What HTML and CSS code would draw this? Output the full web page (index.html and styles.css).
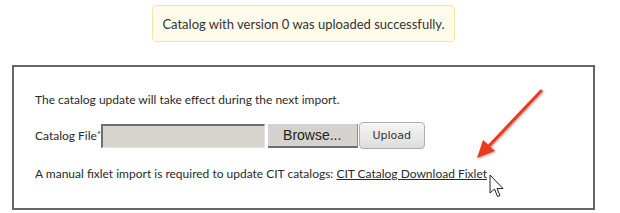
FILE: index.html
```html
<!DOCTYPE html>
<html lang="en">
<head>
    <meta charset="UTF-8">
    <title>Catalog upload</title>
    <link rel="stylesheet" href="styles.css">
</head>
<body>
    <div class="page">
        <div class="notice">Catalog with version 0 was uploaded successfully.</div>
        <div class="panel">
            <p class="intro">The catalog update will take effect during the next import.</p>
            <div class="file-row">
                <label class="file-label">Catalog File<span class="req">*</span></label>
                <span class="file-input"></span>
                <span class="browse">Browse...</span>
                <button class="upload">Upload</button>
            </div>
            <p class="manual">A manual fixlet import is required to update CIT catalogs: <a href="" class="link">CIT Catalog Download Fixlet</a></p>

            <!-- annotation overlay -->
            <svg class="arrow" width="80" height="80" viewBox="0 0 80 80">
                <defs>
                    <filter id="shadow" x="-20%" y="-20%" width="140%" height="140%">
                        <feDropShadow dx="1" dy="1" stdDeviation="1" flood-color="#000" flood-opacity="0.35"/>
                    </filter>
                </defs>
                <g filter="url(#shadow)">
                    <line x1="68" y1="7" x2="14" y2="64" stroke="#ec3a1e" stroke-width="3" stroke-linecap="round"/>
                    <polygon points="4,74 10,56 22,67" fill="#ec3a1e"/>
                </g>
            </svg>
            <svg class="cursor" width="16" height="26" viewBox="0 0 16 26">
                <path d="M1 1 L1 19 L5.5 15 L8.5 22.5 L11 21.5 L8 14.5 L14 14.5 Z" fill="#fff" stroke="#222" stroke-width="1" stroke-linejoin="round"/>
            </svg>
        </div>
    </div>
</body>
</html>
```

FILE: styles.css
```css
body {
    margin: 0;
    background-color: white;
    font-family: Lato, "Open Sans", sans-serif;
    color: #2a2a2a;
}

.page {
    width: 583px;
    margin-left: 12px;
    padding-top: 5px;
}

.notice {
    width: 301px;
    height: 35px;
    margin: 0 auto 23px;
    display: flex;
    justify-content: center;
    align-items: center;
    box-sizing: content-box;
    border: 1px solid #f6e7a6;
    border-radius: 4px;
    background-color: #fffbea;
    font-size: 13px;
    color: #333;
}

.panel {
    position: relative;
    height: 115px;
    border: 2px solid #666;
    padding: 26px 21px 0;
    box-sizing: content-box;
    font-size: 12px;
}

.intro,
.manual {
    margin: 0;
    line-height: 14px;
}

.file-row {
    display: flex;
    align-items: center;
    height: 27px;
    margin: 15px 0 18px;
}

.file-label {
    line-height: 14px;
}

.req {
    font-size: 9px;
    vertical-align: 2px;
}

.file-input {
    width: 161px;
    height: 21px;
    border-style: solid;
    border-width: 2px 1px 1px 2px;
    border-color: #707070 #e4e2de #e4e2de #707070;
    background-color: #d7d4cf;
}

.browse {
    display: flex;
    justify-content: center;
    align-items: center;
    width: 89px;
    height: 22px;
    margin-left: 3px;
    border-bottom: 2px solid #6e6e6e;
    border-right: 1px solid #8a8a8a;
    background-color: #d6d3ce;
    font-family: "Liberation Sans", Arial, sans-serif;
    font-size: 14px;
    color: #222;
}

.upload {
    width: 66px;
    height: 27px;
    margin-left: 1px;
    padding: 0;
    border: 1px solid #aeaeae;
    border-radius: 4px;
    background-image: linear-gradient(to bottom, #f6f6f6, #dcdcdc);
    font-family: "DejaVu Sans", Verdana, sans-serif;
    font-size: 11px;
    color: #333;
}

.link,
.link:visited {
    color: #2a2a2a;
    text-decoration: underline;
}

.arrow {
    position: absolute;
    left: 459px;
    top: 17px;
}

.cursor {
    position: absolute;
    left: 475px;
    top: 107px;
}
```
